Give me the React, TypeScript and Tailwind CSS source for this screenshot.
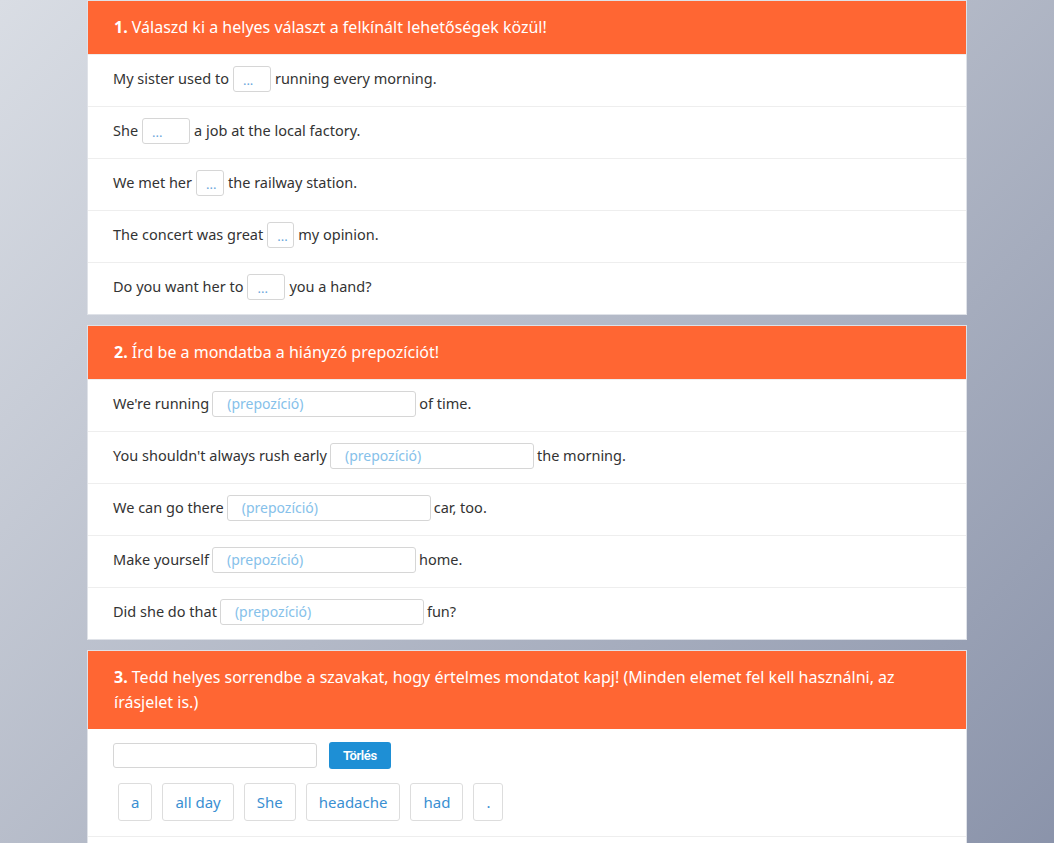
const selects = [
  { before: "My sister used to", after: "running every morning.", w: "w-[38px]" },
  { before: "She", after: "a job at the local factory.", w: "w-[48px]" },
  { before: "We met her", after: "the railway station.", w: "w-[28px]" },
  { before: "The concert was great", after: "my opinion.", w: "w-[27px]" },
  { before: "Do you want her to", after: "you a hand?", w: "w-[38px]" },
];

const gaps = [
  { before: "We're running", after: "of time." },
  { before: "You shouldn't always rush early", after: "the morning." },
  { before: "We can go there", after: "car, too." },
  { before: "Make yourself", after: "home." },
  { before: "Did she do that", after: "fun?" },
];

const words = ["a", "all day", "She", "headache", "had", "."];

const Header = ({ num, text }: { num: string; text: string }) => (
  <div className="bg-[#ff6633] text-white px-[26px] py-[14px] text-[16px] leading-[25px]">
    <span className="font-bold">{num}</span> {text}
  </div>
);

const Row = ({ children }: { children: React.ReactNode }) => (
  <div className="h-[52px] flex items-center gap-[3px] px-[25px] pb-[4px] border-t border-[#eeeeee] first:border-t-0">
    {children}
  </div>
);

export default function App() {
  return (
    <div
      className="min-h-[843px] w-full bg-[linear-gradient(135deg,#d9dde4_0%,#b3b9c7_50%,#8a93aa_100%)] text-[#333333] text-[14.5px]"
      style={{ fontFamily: '"Noto Sans", "Open Sans", sans-serif' }}
    >
      <div className="w-[880px] mx-auto flex flex-col gap-[10px]">
        <div className="bg-white border border-[#dfe2e8]">
          <Header num="1." text="Válaszd ki a helyes választ a felkínált lehetőségek közül!" />
          {selects.map((s) => (
            <Row key={s.before}>
              <span>{s.before}</span>
              <span
                className={`${s.w} h-[26px] border border-[#d6d6d6] rounded-[3px] text-[#6aa8dc] text-[13px] leading-[26px] pl-[9px] mx-[1px]`}
              >
                ...
              </span>
              <span>{s.after}</span>
            </Row>
          ))}
        </div>

        <div className="bg-white border border-[#dfe2e8]">
          <Header num="2." text="Írd be a mondatba a hiányzó prepozíciót!" />
          {gaps.map((g) => (
            <Row key={g.before}>
              <span>{g.before}</span>
              <input
                readOnly
                placeholder="(prepozíció)"
                className="w-[204px] h-[26px] border border-[#d6d6d6] rounded-[3px] px-[14px] text-[14px] placeholder:text-[#86c1ea] outline-none"
              />
              <span>{g.after}</span>
            </Row>
          ))}
        </div>

        <div className="bg-white border border-[#dfe2e8]">
          <Header
            num="3."
            text="Tedd helyes sorrendbe a szavakat, hogy értelmes mondatot kapj! (Minden elemet fel kell használni, az írásjelet is.)"
          />
          <div className="px-[25px] pt-[13px] pb-[15px] border-b border-[#eeeeee]">
            <div className="flex items-center gap-[12px]">
              <input
                readOnly
                className="w-[204px] h-[25px] border border-[#d6d6d6] rounded-[3px] outline-none"
              />
              <button
                className="h-[27px] px-[14px] bg-[#1e8fd5] text-white text-[13px] font-semibold rounded-[3px] tracking-[-0.4px]"
                style={{ fontFamily: 'Roboto, sans-serif' }}
              >
                Törlés
              </button>
            </div>
            <div className="flex gap-[10px] mt-[14px] ml-[5px]">
              {words.map((w) => (
                <button
                  key={w}
                  className="h-[38px] px-[12px] border border-[#dddddd] rounded-[3px] text-[#3a8fd2] text-[15px] bg-white"
                >
                  {w}
                </button>
              ))}
            </div>
          </div>
          <div className="h-[20px]" />
        </div>
      </div>
    </div>
  );
}
